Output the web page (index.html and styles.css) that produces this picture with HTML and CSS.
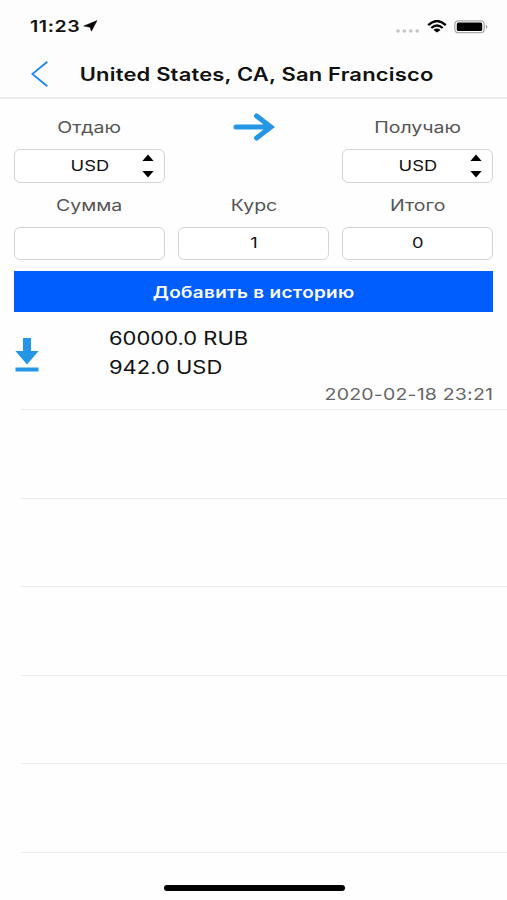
FILE: index.html
```html
<!DOCTYPE html>
<html lang="ru">
<head>
<meta charset="utf-8">
<title>United States, CA, San Francisco</title>
<link rel="stylesheet" href="styles.css">
</head>
<body>
<div class="screen">
  <header class="top">
    <div class="status">
      <span class="wide left time">11:23</span>
      <svg class="location" width="15" height="13" viewBox="0 0 15 13"><path d="M14 .6 8.4 11.2 7.1 7.2.8 6Z" stroke="#000" stroke-width=".5"/></svg>
      <svg class="signal" width="24" height="4" viewBox="0 0 24 4"><circle cx="2" cy="2" r="1.8"/><circle cx="8.4" cy="2" r="1.8"/><circle cx="14.8" cy="2" r="1.8"/><circle cx="21.2" cy="2" r="1.8"/></svg>
      <svg class="wifi" width="20" height="13" viewBox="0 0 20 13"><path d="M1.2 5.1Q10-3 18.8 5.1M4.3 8Q10 2.9 15.7 8" fill="none" stroke="#000" stroke-width="2.3"/><path d="M6.5 10Q10 7.2 13.5 10L10 12.6Z"/></svg>
      <svg class="battery" width="34" height="14" viewBox="0 0 34 14"><rect x=".8" y=".8" width="29.4" height="11.9" rx="3.4" fill="#fff" stroke="#aaa" stroke-width="1.3"/><rect x="2.8" y="2.5" width="25.4" height="8.5" rx="1.6"/><path d="M31.8 4.8q3.2 2 0 4Z" fill="#999"/></svg>
    </div>
    <div class="nav">
      <svg class="back" width="18" height="28" viewBox="0 0 18 28"><path d="M16.3 1.8 1.3 14 16.3 26.2" fill="none" stroke="#1b84f5" stroke-width="1.8"/></svg>
      <h1 class="wide">United States, CA, San Francisco</h1>
    </div>
  </header>
  <main>
    <section class="form">
      <div class="label"><span class="wide">Отдаю</span></div>
      <div class="label"><svg class="arrow" width="42" height="28" viewBox="0 0 42 28"><path d="M3 14H36M23.6 3 38 14 23.6 25" fill="none" stroke="#2595e6" stroke-width="5" stroke-linecap="round" stroke-linejoin="miter"/></svg></div>
      <div class="label"><span class="wide">Получаю</span></div>
      <div class="field select"><span class="wide">USD</span><svg class="carets" width="12" height="24" viewBox="0 0 12 24"><path d="M6 .6 11.6 7H.4ZM6 23.4.4 17h11.2Z"/></svg></div>
      <div></div>
      <div class="field select"><span class="wide">USD</span><svg class="carets" width="12" height="24" viewBox="0 0 12 24"><path d="M6 .6 11.6 7H.4ZM6 23.4.4 17h11.2Z"/></svg></div>
      <div class="label second"><span class="wide">Сумма</span></div>
      <div class="label second"><span class="wide">Курс</span></div>
      <div class="label second"><span class="wide">Итого</span></div>
      <div class="field"></div>
      <div class="field"><span class="wide">1</span></div>
      <div class="field"><span class="wide">0</span></div>
    </section>
    <div class="add"><span class="wide">Добавить в историю</span></div>
    <section class="history">
      <article class="entry">
        <svg class="download" width="24" height="34" viewBox="0 0 24 34"><path d="M8 0h8v13h7.6L12 26.5.4 13H8ZM.5 29.5h23v4H.5Z" fill="#2595e6"/></svg>
        <div class="amounts"><span class="wide left">60000.0 RUB</span><span class="wide left">942.0 USD</span></div>
        <time class="wide right">2020-02-18 23:21</time>
      </article>
      <div class="row"></div><div class="row"></div><div class="row"></div><div class="row"></div><div class="row"></div>
    </section>
  </main>
  <footer class="home"></footer>
</div>
</body>
</html>
```
FILE: styles.css
```css
* { box-sizing: border-box; }
body { margin: 0; background: #fff; color: #111; font-family: Inter, "Liberation Sans", sans-serif; }
svg { display: block; flex: none; }
.screen { width: 507px; height: 900px; overflow: hidden; display: flex; flex-direction: column; background: #fefefe; }
.wide { display: inline-block; white-space: nowrap; transform: scaleX(1.22); }
.left { transform-origin: left; }
.right { transform-origin: right; }
.top { height: 99px; border-bottom: 2px solid #ececec; background: #fdfdfd; }
.status { height: 49px; padding: 16px 19px 0 30px; display: flex; align-items: flex-start; }
.time { width: 55px; font-size: 16px; letter-spacing: .5px; line-height: 21px; font-weight: 600; }
.location { margin-top: 4px; }
.signal { margin: 13px 0 0 298px; fill: #c4c4c4; }
.wifi { margin: 4px 0 0 7px; }
.battery { margin: 4px 0 0 7px; }
.nav { height: 48px; display: flex; align-items: center; padding: 2px 0 0 31px; }
.nav h1 { margin: 0 0 0 27px; width: 360px; padding: 1px 0 0 1px; text-align: center; flex: none; font-size: 18px; letter-spacing: .15px; line-height: 24px; font-weight: 600; }
.form { display: grid; grid-template-columns: repeat(3, 150.5px); grid-template-rows: 50px 34px 43.5px 33.5px; column-gap: 13.6px; padding-left: 14.3px; }
.label { display: flex; justify-content: center; align-items: center; padding-top: 6px; color: #555; font-size: 16px; line-height: 22px; }
.arrow { margin-top: -1px; }
.second { padding-top: 0; }
.field { display: flex; justify-content: center; align-items: center; border: 1.5px solid #d4d4d4; border-radius: 6px; background: #fff; font-size: 15px; line-height: 20px; }
.select { position: relative; }
.carets { position: absolute; right: 10px; top: 4px; }
.add { margin: 11px 14px 0; height: 41px; padding-top: 2px; background: #005eff; color: #fff; font-size: 15.5px; letter-spacing: .27px; font-weight: 600; display: flex; align-items: center; justify-content: center; }
.entry { height: 97px; display: grid; grid-template-columns: 93.5px 1fr; grid-template-rows: 71px 26px; padding: 0 14px 0 15px; }
.download { margin-top: 26px; }
.amounts { display: flex; flex-direction: column; align-items: flex-start; padding-top: 12px; font-size: 18px; line-height: 29px; }
.entry time { grid-column: 1 / 3; justify-self: end; color: #666; font-size: 16px; letter-spacing: .15px; line-height: 22px; }
.row { height: 88.6px; margin-left: 21px; border-top: 1.5px solid #ececec; }
.history { height: 541.5px; }
.history .row:last-child { height: 89.5px; border-bottom: 1.5px solid #ececec; }
.home { width: 181px; height: 6px; border-radius: 3px; background: #000; margin: 31px 0 0 163.5px; }
```
